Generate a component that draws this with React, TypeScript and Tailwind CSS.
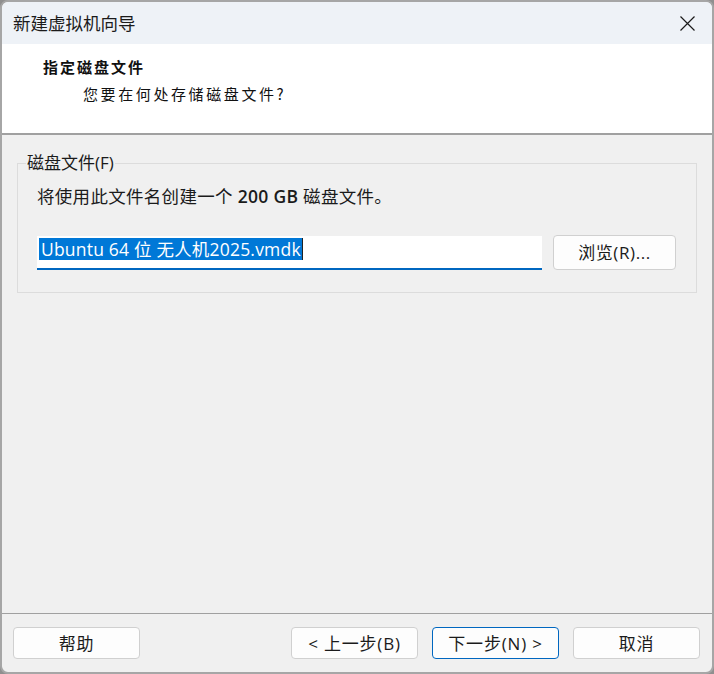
export default function App() {
  const btn =
    "h-[32px] w-[127px] rounded-[4px] border bg-[#fdfdfd] text-[17px] tracking-[0.8px] leading-none text-[#1b1b1b] flex items-center justify-center";
  return (
    <div className="w-[714px] h-[674px] bg-[#8f8f8f] font-['Open_Sans','Noto_Sans_CJK_SC',sans-serif]">
      <div className="flex flex-col h-full rounded-[8px] border-2 border-[#a6a6a6] bg-[#f0f0f0] overflow-hidden">
        {/* title bar */}
        <div className="h-[42px] shrink-0 bg-[#eef2f7] flex items-center justify-between pl-[11px] pr-[17px]">
          <span className="text-[17.5px] text-[#1b1b1b] font-['Noto_Sans_CJK_SC',sans-serif]">新建虚拟机向导</span>
          <svg width="15" height="15" viewBox="0 0 15 15" className="text-[#1b1b1b]">
            <path d="M0.5 0.5 L14.5 14.5 M14.5 0.5 L0.5 14.5" stroke="currentColor" strokeWidth="1.2" fill="none" />
          </svg>
        </div>

        {/* header */}
        <div className="h-[91px] shrink-0 bg-white border-b-2 border-[#a0a0a0] pt-[9px] font-['Noto_Sans_CJK_SC',sans-serif] text-[#111]">
          <p className="pl-[41px] text-[15px] leading-[27px] font-bold tracking-[2px]">指定磁盘文件</p>
          <p className="pl-[81px] text-[15px] leading-[27px] tracking-[2.6px]">您要在何处存储磁盘文件?</p>
        </div>

        {/* body */}
        <div className="flex-1 px-[15px] pt-[18px]">
          <fieldset className="border border-[#dcdcdc] pl-[19px] pr-[20px] pb-[22px]">
            <legend className="ml-[-11px] px-[1px] text-[17px] leading-[20px] text-[#1b1b1b]">磁盘文件(F)</legend>
            <p className="mt-[11px] text-[17.5px] tracking-[0.3px] leading-[24px] text-[#1b1b1b]">
              将使用此文件名创建一个 <span className="font-semibold">200 GB</span> 磁盘文件。
            </p>
            <div className="mt-[27px] flex items-end gap-[11px]">
              <div className="w-[505px] h-[34px] bg-white border-b-2 border-[#0067c0] pt-[2px] pl-[2px]">
                <span className="inline-block h-[22px] leading-[22px] bg-[#0078d7] text-white text-[17.5px] tracking-[0.2px] pl-[2px] pr-[1px] border-r border-[#222]">
                  Ubuntu 64 位 无人机2025.vmdk
                </span>
              </div>
              <button className="h-[35px] w-[123px] rounded-[4px] border border-[#d0d0d0] bg-[#fdfdfd] text-[17px] tracking-[0.6px] text-[#1b1b1b] flex items-center justify-center">
                浏览(R)...
              </button>
            </div>
          </fieldset>
        </div>

        {/* footer */}
        <div className="shrink-0 border-t border-[#a0a0a0] pt-[13px] pb-[13px] pl-[11px] pr-[12px] flex items-center">
          <button className={`${btn} border-[#d0d0d0]`}>帮助</button>
          <div className="flex-1" />
          <div className="flex gap-[14px]">
            <button className={`${btn} border-[#d0d0d0]`}>&lt; 上一步(B)</button>
            <button className={`${btn} border-[#0067c0]`}>下一步(N) &gt;</button>
            <button className={`${btn} border-[#d0d0d0]`}>取消</button>
          </div>
        </div>
      </div>
    </div>
  );
}
